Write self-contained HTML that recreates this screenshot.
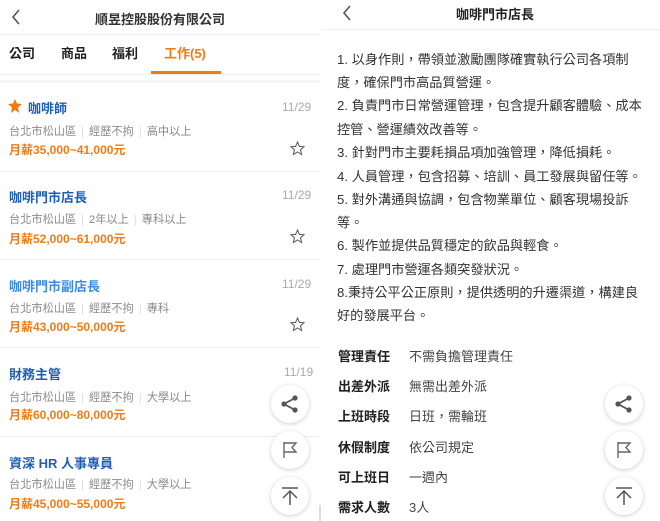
<!DOCTYPE html>
<html><head><meta charset="utf-8"><style>
*{margin:0;padding:0;box-sizing:border-box}
body{width:660px;height:521px;overflow:hidden;background:#fff;font-family:"Liberation Sans","Noto Sans CJK TC",sans-serif;position:relative;color:#222}
.a{position:absolute;white-space:nowrap}
.t{font-size:13px;font-weight:bold;color:#1f5eb5}
.m{font-size:11.2px;color:#8a8a8a}
.m i{font-style:normal;color:#ddd;margin:0 5px}
.s{font-size:12px;font-weight:bold;color:#f07b15}
.d{font-size:12px;color:#aaa}
.hr{position:absolute;height:1px;background:#eee}
.fab{position:absolute;width:38px;height:38px;border-radius:50%;background:#fff;box-shadow:0 1px 5px rgba(0,0,0,.2)}
.fab svg{position:absolute;left:9px;top:9px}
.p{font-size:13.2px;color:#333;left:337px}
.lb{font-size:13px;font-weight:bold;color:#222;left:338px}
.vl{font-size:13px;color:#444;left:409px}
</style></head><body>
<svg class="a" style="left:10px;top:9px" width="12" height="16"><path d="M9 1L3 8L9 15" fill="none" stroke="#555" stroke-width="1.6"/></svg>
<div class="a" style="left:0;width:320px;top:9px;text-align:center;font-size:13px;font-weight:bold;color:#333">順昱控股股份有限公司</div>
<div class="hr" style="left:0;width:320px;top:34px"></div>
<div class="a" style="left:9px;top:43px;font-size:13px;font-weight:bold">公司</div>
<div class="a" style="left:61px;top:43px;font-size:13px;font-weight:bold">商品</div>
<div class="a" style="left:112px;top:43px;font-size:13px;font-weight:bold">福利</div>
<div class="a" style="left:164px;top:43px;font-size:13px;font-weight:bold;color:#f07b15">工作(5)</div>
<div class="a" style="left:151px;top:71px;width:70px;height:3px;background:#f07b15"></div>
<div class="hr" style="left:0;width:320px;top:74px"></div>
<div class="a" style="left:0;width:320px;top:80px;height:3px;background:#f4f4f4"></div>

<svg class="a" style="left:8px;top:99px" width="14" height="14"><path d="M7 0L9 4.5L14 5L10 8.5L11 14L7 11L3 14L4 8.5L0 5L5 4.5Z" fill="#f07b15"/></svg>
<div class="a t" style="left:28px;top:98px">咖啡師</div>
<div class="a d" style="left:282px;top:100px">11/29</div>
<div class="a m" style="left:9px;top:123px">台北市松山區<i>|</i>經歷不拘<i>|</i>高中以上</div>
<div class="a s" style="left:9px;top:141px">月薪35,000~41,000元</div>
<svg class="a" style="left:290px;top:141px" width="15" height="15"><path d="M7.5 1L9.4 5.4L14 5.8L10.5 8.8L11.6 13.5L7.5 11L3.4 13.5L4.5 8.8L1 5.8L5.6 5.4Z" fill="none" stroke="#555" stroke-width="1"/></svg>
<div class="hr" style="left:0;width:320px;top:171px"></div>

<div class="a t" style="left:9px;top:187px">咖啡門市店長</div>
<div class="a d" style="left:282px;top:188px">11/29</div>
<div class="a m" style="left:9px;top:211px">台北市松山區<i>|</i>2年以上<i>|</i>專科以上</div>
<div class="a s" style="left:9px;top:230px">月薪52,000~61,000元</div>
<svg class="a" style="left:290px;top:229px" width="15" height="15"><path d="M7.5 1L9.4 5.4L14 5.8L10.5 8.8L11.6 13.5L7.5 11L3.4 13.5L4.5 8.8L1 5.8L5.6 5.4Z" fill="none" stroke="#555" stroke-width="1"/></svg>
<div class="hr" style="left:0;width:320px;top:259px"></div>

<div class="a t" style="left:9px;top:276px;color:#3a8be6">咖啡門市副店長</div>
<div class="a d" style="left:282px;top:277px">11/29</div>
<div class="a m" style="left:9px;top:300px">台北市松山區<i>|</i>經歷不拘<i>|</i>專科</div>
<div class="a s" style="left:9px;top:318px">月薪43,000~50,000元</div>
<svg class="a" style="left:290px;top:317px" width="15" height="15"><path d="M7.5 1L9.4 5.4L14 5.8L10.5 8.8L11.6 13.5L7.5 11L3.4 13.5L4.5 8.8L1 5.8L5.6 5.4Z" fill="none" stroke="#555" stroke-width="1"/></svg>
<div class="hr" style="left:0;width:320px;top:347px"></div>

<div class="a t" style="left:9px;top:364px">財務主管</div>
<div class="a d" style="left:284px;top:365px">11/19</div>
<div class="a m" style="left:9px;top:389px">台北市松山區<i>|</i>經歷不拘<i>|</i>大學以上</div>
<div class="a s" style="left:9px;top:406px">月薪60,000~80,000元</div>
<div class="hr" style="left:0;width:320px;top:436px"></div>

<div class="a t" style="left:9px;top:453px">資深 HR 人事專員</div>
<div class="a m" style="left:9px;top:476px">台北市松山區<i>|</i>經歷不拘<i>|</i>大學以上</div>
<div class="a s" style="left:9px;top:495px">月薪45,000~55,000元</div>
<div class="a" style="left:319px;top:505px;width:2px;height:16px;background:#ddd"></div>

<svg class="a" style="left:341px;top:5px" width="12" height="16"><path d="M9 1L3 8L9 15" fill="none" stroke="#555" stroke-width="1.6"/></svg>
<div class="a" style="left:330px;width:330px;top:4px;text-align:center;font-size:13px;font-weight:bold;color:#222">咖啡門市店長</div>
<div class="hr" style="left:322px;width:338px;top:29px"></div>
<div class="a p" style="top:49px">1. 以身作則，帶領並激勵團隊確實執行公司各項制</div>
<div class="a p" style="top:72px">度，確保門市高品質營運。</div>
<div class="a p" style="top:95px">2. 負責門市日常營運管理，包含提升顧客體驗、成本</div>
<div class="a p" style="top:119px">控管、營運績效改善等。</div>
<div class="a p" style="top:142px">3. 針對門市主要耗損品項加強管理，降低損耗。</div>
<div class="a p" style="top:166px">4. 人員管理，包含招募、培訓、員工發展與留任等。</div>
<div class="a p" style="top:189px">5. 對外溝通與協調，包含物業單位、顧客現場投訴</div>
<div class="a p" style="top:212px">等。</div>
<div class="a p" style="top:235px">6. 製作並提供品質穩定的飲品與輕食。</div>
<div class="a p" style="top:259px">7. 處理門市營運各類突發狀況。</div>
<div class="a p" style="top:282px">8.秉持公平公正原則，提供透明的升遷渠道，構建良</div>
<div class="a p" style="top:305px">好的發展平台。</div>
<div class="a lb" style="top:346px">管理責任</div><div class="a vl" style="top:346px">不需負擔管理責任</div>
<div class="a lb" style="top:376px">出差外派</div><div class="a vl" style="top:376px">無需出差外派</div>
<div class="a lb" style="top:406px">上班時段</div><div class="a vl" style="top:406px">日班，需輪班</div>
<div class="a lb" style="top:437px">休假制度</div><div class="a vl" style="top:437px">依公司規定</div>
<div class="a lb" style="top:467px">可上班日</div><div class="a vl" style="top:467px">一週內</div>
<div class="a lb" style="top:497px">需求人數</div><div class="a vl" style="top:497px">3人</div>

<div class="fab" style="left:271px;top:385px"><svg width="20" height="20"><circle cx="15" cy="4" r="2.6" fill="#555"/><circle cx="4" cy="10" r="2.6" fill="#555"/><circle cx="15" cy="16" r="2.6" fill="#555"/><path d="M15 4L4 10L15 16" stroke="#555" stroke-width="1.8" fill="none"/></svg></div>
<div class="fab" style="left:271px;top:431px"><svg width="20" height="20"><path d="M4 2V18M4 3H16L12 7.5L16 12H4" fill="none" stroke="#666" stroke-width="1.4"/></svg></div>
<div class="fab" style="left:271px;top:477px"><svg width="20" height="20"><path d="M2 2H18M10 5V19M3 12L10 5L17 12" fill="none" stroke="#555" stroke-width="1.5"/></svg></div>
<div class="fab" style="left:605px;top:385px"><svg width="20" height="20"><circle cx="15" cy="4" r="2.6" fill="#555"/><circle cx="4" cy="10" r="2.6" fill="#555"/><circle cx="15" cy="16" r="2.6" fill="#555"/><path d="M15 4L4 10L15 16" stroke="#555" stroke-width="1.8" fill="none"/></svg></div>
<div class="fab" style="left:605px;top:431px"><svg width="20" height="20"><path d="M4 2V18M4 3H16L12 7.5L16 12H4" fill="none" stroke="#666" stroke-width="1.4"/></svg></div>
<div class="fab" style="left:605px;top:477px"><svg width="20" height="20"><path d="M2 2H18M10 5V19M3 12L10 5L17 12" fill="none" stroke="#555" stroke-width="1.5"/></svg></div>
</body></html>
